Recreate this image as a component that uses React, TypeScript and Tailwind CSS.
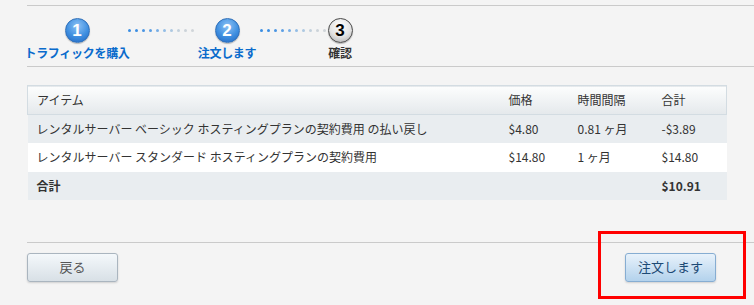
import React from "react";

const dotColors = ["#3b8ee3", "#3b8ee3", "#4a95e3", "#5c9fe4", "#77aee6", "#93bde6", "#adc8e1", "#c2d0dc", "#ccd3d9", "#d0d5d9"];

function Dots() {
    return <div className="flex items-center gap-[4px] mt-[11px]">
        {dotColors.map((c, i) => <span key={i} className="block w-[3px] h-[3px] rounded-full" style={{ backgroundColor: c }} />)}
    </div>
}

function Step({ num, label, active, width }: { num: number, label: string, active: boolean, width: string }) {
    return <div className={"flex flex-col items-center " + width}>
        {active ?
            <div className="w-[25px] h-[25px] rounded-full border border-[#2f6fb8] bg-[radial-gradient(circle_at_50%_30%,#8cc2f5_0%,#3f8fe0_55%,#1f66c2_100%)] shadow-[0_1px_1px_rgba(0,0,0,0.25)] flex items-center justify-center text-white font-bold text-[17px] leading-none font-['Liberation_Sans',sans-serif]">{num}</div> :
            <div className="w-[25px] h-[25px] rounded-full border border-[#4a4a4a] bg-[radial-gradient(circle_at_50%_30%,#ffffff_0%,#e2e2e2_55%,#a9a9a9_100%)] shadow-[0_1px_1px_rgba(0,0,0,0.25)] flex items-center justify-center text-black font-bold text-[17px] leading-none font-['Liberation_Sans',sans-serif]">{num}</div>}
        <div className={"mt-[3px] text-[12px] leading-[14px] font-bold whitespace-nowrap tracking-[-0.3px] " + (active ? "text-[#0a6bcc]" : "text-[#333]")}>{label}</div>
    </div>
}

export default function App() {
    return <div className="min-h-[305px] bg-[#f4f4f4] relative font-['Noto_Sans_CJK_JP','Liberation_Sans',sans-serif] text-[#333] overflow-hidden">
        <div className="pl-[27px] pt-[5px]">
            <div className="border-t border-[#cacaca]" />
            <div className="flex items-start pt-[12px] h-[60px]">
                <Step num={1} label="トラフィックを購入" active={true} width="w-[100px]" />
                <div className="w-[68px] pl-[1px]"><Dots /></div>
                <Step num={2} label="注文します" active={true} width="w-[64px]" />
                <div className="w-[67px] pl-[1px]"><Dots /></div>
                <Step num={3} label="確認" active={false} width="w-[28px]" />
            </div>
            <div className="border-t border-[#cacaca]" />

            <table className="mt-[18px] w-[699px] border-collapse text-[12px] table-fixed">
                <colgroup>
                    <col className="w-[472px]" />
                    <col className="w-[69px]" />
                    <col className="w-[84px]" />
                    <col className="w-[74px]" />
                </colgroup>
                <thead>
                    <tr className="h-[29px] bg-[linear-gradient(#fcfdfd,#e5e9ec)] border border-[#d3dce2]">
                        <th className="text-left font-normal pl-[9px]">アイテム</th>
                        <th className="text-left font-normal pl-[9px]">価格</th>
                        <th className="text-left font-normal pl-[9px]">時間間隔</th>
                        <th className="text-left font-normal pl-[9px]">合計</th>
                    </tr>
                </thead>
                <tbody>
                    <tr className="h-[28px] bg-[#e9edf0]">
                        <td className="pl-[9px] whitespace-nowrap">レンタルサーバー ベーシック ホスティングプランの契約費用 の払い戻し</td>
                        <td className="pl-[9px]">$4.80</td>
                        <td className="pl-[9px]">0.81 ヶ月</td>
                        <td className="pl-[9px]">-$3.89</td>
                    </tr>
                    <tr className="h-[29px] bg-white">
                        <td className="pl-[9px] whitespace-nowrap">レンタルサーバー スタンダード ホスティングプランの契約費用</td>
                        <td className="pl-[9px]">$14.80</td>
                        <td className="pl-[9px]">1 ヶ月</td>
                        <td className="pl-[9px]">$14.80</td>
                    </tr>
                    <tr className="h-[28px] bg-[#e9edf0] font-bold">
                        <td className="pl-[9px]">合計</td>
                        <td></td>
                        <td></td>
                        <td className="pl-[9px]">$10.91</td>
                    </tr>
                </tbody>
            </table>

            <div className="mt-[42px] border-t border-[#cacaca]" />
            <div className="flex justify-between pt-[10px] pr-[38px]">
                <button className="w-[91px] h-[29px] rounded-[3px] border border-[#aab5bf] bg-[linear-gradient(#f4f8fb,#d8e0e6)] shadow-[0_1px_2px_rgba(0,0,0,0.15)] text-[13px] text-[#555]">戻る</button>
                <button className="w-[91px] h-[29px] rounded-[3px] border border-[#86add2] bg-[linear-gradient(#e8f2fb,#b3d2ec)] shadow-[0_1px_2px_rgba(0,0,0,0.15)] text-[13px] text-[#1d4a75]">注文します</button>
            </div>
        </div>
        <div className="absolute left-[598px] top-[231px] w-[148px] h-[68px] border-[3px] border-[#ff0000]" />
    </div>
}
